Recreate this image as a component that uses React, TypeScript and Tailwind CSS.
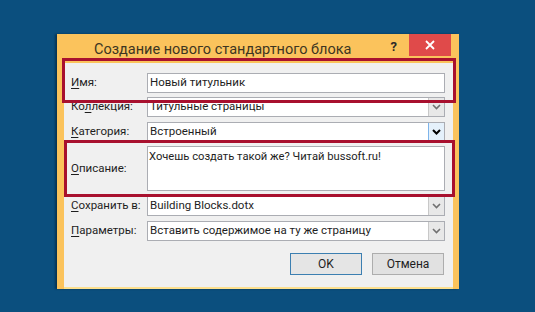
import React from "react";

const font = { fontFamily: "Roboto, 'Open Sans', sans-serif" };

function Chevron({ dark }: { dark?: boolean }) {
  return (
    <svg width="9" height="6" viewBox="0 0 9 6">
      <path
        d="M1 1 L4.5 4.5 L8 1"
        fill="none"
        stroke={dark ? "#000" : "#707070"}
        strokeWidth={dark ? 2 : 1.6}
      />
    </svg>
  );
}

function Label({ pre, u, post }: { pre?: string; u: string; post: string }) {
  return (
    <div className="w-[76px] shrink-0 whitespace-nowrap text-[11.5px] text-[#1e1e1e]">
      {pre}
      <span className="underline underline-offset-2">{u}</span>
      {post}
    </div>
  );
}

function Field({ value, drop, active }: { value: string; drop?: boolean; active?: boolean }) {
  return (
    <div className="flex h-[20px] flex-1 items-center border border-[#abadb3] bg-white">
      <div className="flex-1 truncate pl-[2px] text-[11.5px] text-[#1e1e1e]">{value}</div>
      {drop && (
        <div
          className={`flex h-full w-[16px] items-center justify-center border-l ${
            active ? "border-[#7eb4ea] bg-[#e5f1fb]" : "border-[#c8c8c8] bg-[#e8e8e8]"
          }`}
        >
          <Chevron dark={active} />
        </div>
      )}
    </div>
  );
}

export default function App() {
  return (
    <div className="h-[312px] w-[535px] bg-[#0b4f7e] pl-[57px] pt-[34px]" style={font}>
      <div className="relative flex h-[255px] w-[402px] flex-col bg-[#fbc35c] shadow-[-2px_0_2px_rgba(0,0,0,0.35)]">
        {/* Title bar */}
        <div className="flex h-[29px] items-start">
          <div className="flex-1 whitespace-nowrap pl-[37px] pt-[6px] text-[14.5px] leading-[20px] text-[#3d3622]">
            Создание нового стандартного блока
          </div>
          <div className="mr-[12px] pt-[5px] text-[13px] font-bold leading-[16px] text-[#2a2a2a]">?</div>
          <div className="mr-[8px] flex h-[22px] w-[42px] items-center justify-center bg-[#e04a4a]">
            <svg width="10" height="10" viewBox="0 0 10 10">
              <path d="M1 1 L9 9 M9 1 L1 9" stroke="#fff" strokeWidth="1.8" />
            </svg>
          </div>
        </div>

        {/* Client area */}
        <div className="ml-[7px] mr-[6px] flex flex-1 flex-col border-b-2 border-[#fde08e] bg-[#f0f0f0] pb-[7px] pl-[7px] pr-[8px] pt-[10px]">
          <div className="flex items-center">
            <Label u="И" post="мя:" />
            <Field value="Новый титульник" />
          </div>
          <div className="mt-[4px] flex items-center">
            <Label pre="Ко" u="л" post="лекция:" />
            <Field value="Титульные страницы" drop />
          </div>
          <div className="mt-[5px] flex items-center">
            <Label u="К" post="атегория:" />
            <Field value="Встроенный" drop active />
          </div>
          <div className="mt-[4px] flex items-center">
            <Label u="О" post="писание:" />
            <div className="h-[45px] flex-1 border border-[#abadb3] bg-white pl-[1px] pt-[2px] text-[11.2px] leading-[16px] text-[#1e1e1e]">
              Хочешь создать такой же? Читай bussoft.ru!
            </div>
          </div>
          <div className="mt-[5px] flex items-center">
            <Label u="С" post="охранить в:" />
            <Field value="Building Blocks.dotx" drop />
          </div>
          <div className="mt-[5px] flex items-center">
            <Label u="П" post="араметры:" />
            <Field value="Вставить содержимое на ту же страницу" drop />
          </div>
          <div className="mt-[12px] flex justify-end gap-[10px] pr-[1px]">
            <button className="h-[22px] w-[72px] border border-[#3c7fb1] bg-[#e5e5e5] text-[12px] text-[#1e1e1e]">
              OK
            </button>
            <button className="h-[22px] w-[72px] border border-[#adadad] bg-[#e1e1e1] text-[12px] text-[#1e1e1e]">
              Отмена
            </button>
          </div>
        </div>

        {/* Annotation frames */}
        <div className="pointer-events-none absolute left-[5px] top-[24px] h-[45px] w-[394px] border-[3px] border-[#a8102e]" />
        <div className="pointer-events-none absolute left-[7px] top-[106px] h-[57px] w-[391px] border-[3px] border-[#a8102e]" />
      </div>
    </div>
  );
}
